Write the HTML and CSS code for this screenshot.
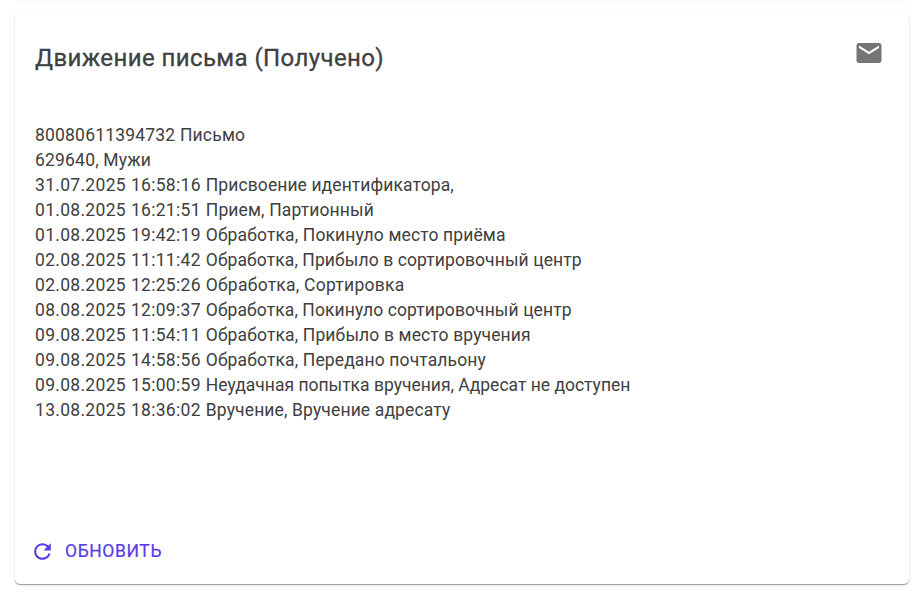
FILE: index.html
```html
<!DOCTYPE html>
<html lang="ru">
<head>
<meta charset="utf-8">
<title>Движение письма</title>
<link rel="stylesheet" href="styles.css">
</head>
<body>
<div class="previous-card"></div>
<main class="card">
  <header class="card-header">
    <h1 class="card-title">Движение письма (Получено)</h1>
    <svg class="mail-icon" viewBox="0 0 24 24" aria-hidden="true"><path d="M20 4H4c-1.100 0-1.990.9-1.990 2L2 18c0 1.100.9 2 2 2h16c1.100 0 2-.9 2-2V6c0-1.100-.9-2-2-2zm0 4l-8 5-8-5V6l8 5 8-5v2z"/></svg>
  </header>
  <div class="card-content">
    <div class="number">80080611394732 Письмо</div>
    <div class="number">629640, Мужи</div>
    <div class="tight"><time>31.07.2025 16:58:16 </time>Присвоение идентификатора,</div>
    <div><time>01.08.2025 16:21:51 </time>Прием, Партионный</div>
    <div><time>01.08.2025 19:42:19 </time>Обработка, Покинуло место приёма</div>
    <div class="tight"><time>02.08.2025 11:11:42 </time>Обработка, Прибыло в сортировочный центр</div>
    <div class="wide"><time>02.08.2025 12:25:26 </time>Обработка, Сортировка</div>
    <div class="tight"><time>08.08.2025 12:09:37 </time>Обработка, Покинуло сортировочный центр</div>
    <div><time>09.08.2025 11:54:11 </time>Обработка, Прибыло в место вручения</div>
    <div><time>09.08.2025 14:58:56 </time>Обработка, Передано почтальону</div>
    <div class="tightest"><time>09.08.2025 15:00:59 </time>Неудачная попытка вручения, Адресат не доступен</div>
    <div><time>13.08.2025 18:36:02 </time>Вручение, Вручение адресату</div>
  </div>
  <footer class="card-actions">
    <button class="refresh" type="button">
      <svg class="refresh-icon" viewBox="0 0 24 24" aria-hidden="true"><path d="M17.650 6.350C16.200 4.900 14.210 4 12 4c-4.420 0-7.990 3.580-7.990 8s3.570 8 7.990 8c3.730 0 6.840-2.550 7.730-6h-2.080c-.820 2.330-3.040 4-5.650 4-3.310 0-6-2.690-6-6s2.690-6 6-6c1.660 0 3.140.690 4.220 1.780L13 11h7V4l-2.350 2.350z"/></svg>
      <span>Обновить</span>
    </button>
  </footer>
</main>
</body>
</html>
```

FILE: styles.css
```css
body {
  display: flow-root;
  min-height: 595px;
  margin: 0;
  background: #fff;
  color: #404040;
  font-family: Roboto, "Liberation Sans", sans-serif;
}

.previous-card {
  width: 890px;
  height: 1px;
  margin-left: 17px;
  background: #f8f8f8;
}

.card {
  box-sizing: border-box;
  display: flex;
  flex-direction: column;
  width: 894px;
  height: 571px;
  margin: 12px 0 0 15px;
  padding: 25px 20px 12px;
  border-radius: 5px;
  background: #fff;
  box-shadow: 0 1px 0 rgba(0, 0, 0, 0.2), 0 1px 1px rgba(0, 0, 0, 0.14), 0 1px 3px rgba(0, 0, 0, 0.14);
}

.card-header {
  display: flex;
  justify-content: space-between;
  padding-right: 5px;
}

.card-title {
  margin: 0;
  font-size: 24px;
  font-weight: 400;
  letter-spacing: 0.4px;
  line-height: 41px;
  -webkit-text-stroke: 0.3px currentColor;
}

.mail-icon {
  width: 30px;
  height: 30px;
  fill: #757575;
}

.card-content {
  margin-top: 44px;
  font-size: 17.5px;
  letter-spacing: 0.13px;
  line-height: 25px;
}

.card-content time {
  letter-spacing: 0.3px;
  word-spacing: 0.35px;
}

.card-content .number {
  letter-spacing: 0.19px;
}

.card-content .tight {
  letter-spacing: 0.09px;
}

.card-content .tightest {
  letter-spacing: 0;
}

.card-content .wide {
  letter-spacing: 0.25px;
}

.card-actions {
  margin-top: auto;
}

.refresh {
  display: flex;
  align-items: center;
  gap: 10px;
  height: 42px;
  margin-left: -5px;
  padding: 0;
  border: 0;
  background: none;
  color: #583ce6;
  font: 400 17.5px/31px Roboto, "Liberation Sans", sans-serif;
  letter-spacing: 0.6px;
  text-transform: uppercase;
  -webkit-text-stroke: 0.2px currentColor;
}

.refresh-icon {
  width: 25px;
  height: 25px;
  fill: currentColor;
}
```
